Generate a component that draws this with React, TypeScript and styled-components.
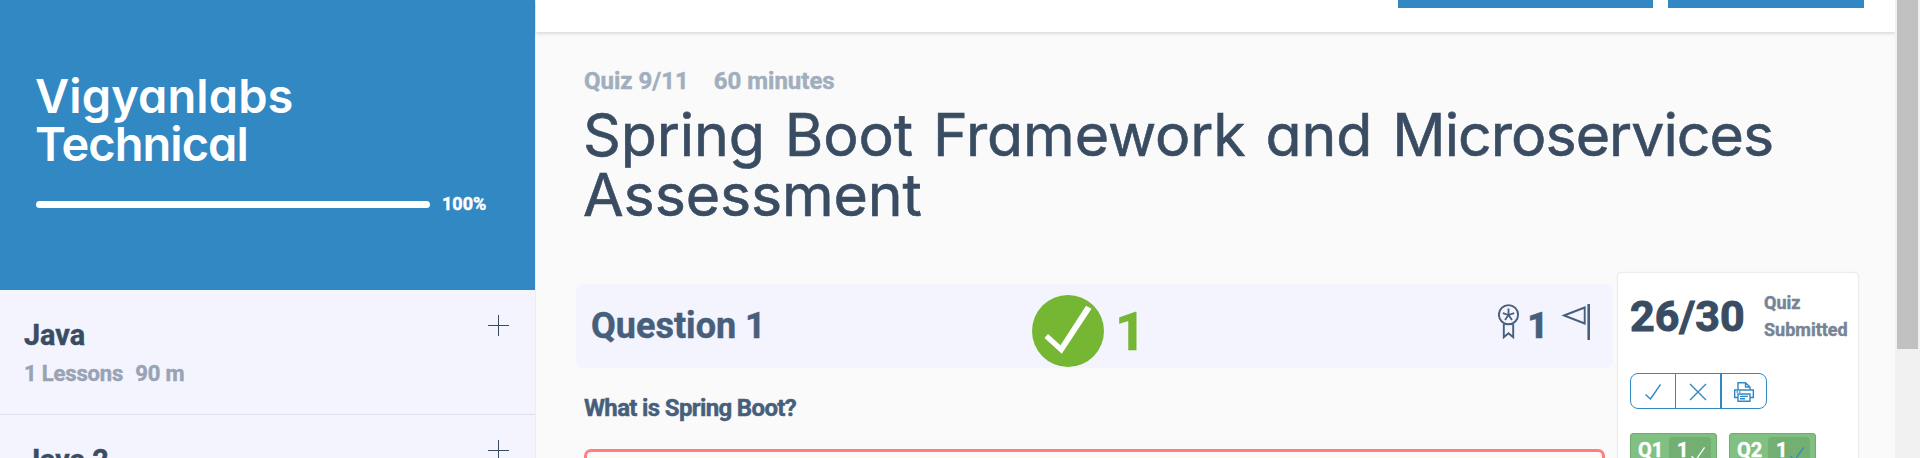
import React from "react";
import styled, { createGlobalStyle } from "styled-components";

const GlobalStyle = createGlobalStyle`
  *, *::before, *::after { box-sizing: border-box; }
  body {
    margin: 0;
    background: #fafafa;
    font-family: Roboto, "Liberation Sans", sans-serif;
    font-weight: 700;
    -webkit-text-stroke: 0.45px currentColor;
    overflow: hidden;
  }
  h1, h2, h3, p { margin: 0; }
  svg { display: block; flex: none; }
`;

const Page = styled.div`
  display: flex;
  width: 1920px;
  height: 458px;
  overflow: hidden;
`;

const Sidebar = styled.aside`
  width: 535px;
  flex: none;
  background: #f4f4ff;
`;

const CourseHeader = styled.header`
  height: 290px;
  padding: 72px 48px 0 35px;
  background: #3288c3;
  color: #fff;
`;

const CourseTitle = styled.h2`
  font: 600 47px/48px Inter, sans-serif;
  font-feature-settings: "cv11";
  -webkit-text-stroke-width: 0;
`;

const TitleLine = styled.span<{ $spacing: number }>`
  display: block;
  letter-spacing: ${(p) => p.$spacing}px;
`;

const ProgressRow = styled.div`
  display: flex;
  align-items: center;
  gap: 12px;
  margin: 22px 0 0 1px;
  height: 27px;
  font-size: 18px;
  line-height: 27px;
`;

const ProgressTrack = styled.div`
  width: 394px;
  height: 7px;
  margin-top: 2px;
  border-radius: 4px;
  background: #fff;
`;

const Section = styled.section`
  display: flex;
  justify-content: space-between;
  height: 125px;
  padding: 25px 25px 0 24px;
  border-bottom: 1px solid #dfdfeb;
`;

const SectionTitle = styled.h3`
  color: #394c62;
  font-size: 28.8px;
  line-height: 40px;
`;

const SectionMeta = styled.p`
  display: flex;
  gap: 12px;
  color: #98a3b4;
  font-size: 22px;
  line-height: 38px;
  letter-spacing: -0.15px;
`;

const Main = styled.main`
  display: flex;
  flex-direction: column;
  width: 1360px;
  flex: none;
  border-left: 1px solid #ededed;
  background: #fafafa;
`;

const TopBar = styled.div`
  display: flex;
  justify-content: flex-end;
  gap: 15px;
  flex: none;
  height: 32px;
  padding-right: 31px;
  background: #fff;
  box-shadow: 0 2px 3px rgba(0, 0, 0, 0.12);
`;

const TopButton = styled.div<{ $width: number }>`
  width: ${(p) => p.$width}px;
  height: 8px;
  background: #3288c3;
`;

const Heading = styled.div`
  height: 241px;
  flex: none;
  padding: 31px 40px 0 48px;
`;

const QuizMeta = styled.p`
  display: flex;
  gap: 25px;
  color: #a1aebe;
  font-size: 24px;
  line-height: 36px;
`;

const QuizTitle = styled.h1`
  margin: 6px 0 0 -1px;
  color: #394c62;
  font: 400 59px/60px Inter, sans-serif;
  font-feature-settings: "cv11";
  letter-spacing: -0.11px;
  word-spacing: 3.5px;
  white-space: nowrap;
  -webkit-text-stroke: 0.6px currentColor;
`;

const TightWord = styled.span`
  letter-spacing: -0.95px;
`;

const Content = styled.div`
  display: flex;
  align-items: flex-start;
  padding-left: 40px;
  gap: 5px;
`;

const QuestionColumn = styled.div`
  width: 1037px;
  padding-top: 11px;
  color: #475f7b;
`;

const QuestionBar = styled.div`
  display: grid;
  grid-template-columns: 440px 1fr auto;
  height: 84px;
  padding: 0 22px 0 16px;
  border-radius: 7px;
  background: #f4f4ff;
`;

const QuestionTitle = styled.h2`
  margin-left: -1px;
  font-size: 36px;
  line-height: 85px;
`;

const Result = styled.div`
  display: flex;
  gap: 11px;
  padding-top: 11px;
  color: #75b633;
  font-size: 54px;
  line-height: 73px;
`;

const Points = styled.div`
  display: flex;
  align-items: flex-start;
  gap: 7px;
  font-size: 36px;
  font-weight: 900;
  line-height: 85px;

  svg { margin-top: 20px; }
  svg:last-child { margin-left: 6px; }
`;

const QuestionText = styled.p`
  margin-top: 22px;
  padding-left: 8px;
  font-size: 24px;
  line-height: 37px;
  letter-spacing: -0.65px;
`;

const Answer = styled.div`
  width: 1021px;
  height: 60px;
  margin: 22px 0 0 8px;
  border: 3px solid #ff7f7f;
  border-radius: 7px;
`;

const ScoreCard = styled.aside`
  width: 240px;
  height: 200px;
  padding: 0 0 0 12px;
  border-radius: 4px;
  background: #fff;
  box-shadow: 0 0 2px rgba(0, 0, 0, 0.22);
`;

const ScoreRow = styled.div`
  display: flex;
  height: 100px;
`;

const Score = styled.div`
  width: 134px;
  padding-top: 11px;
  color: #394c62;
  font-size: 43px;
  line-height: 64px;
  -webkit-text-stroke-width: 1px;
`;

const Status = styled.div`
  width: 90px;
  padding-top: 16px;
  color: #768495;
  font-size: 18px;
  line-height: 27px;
`;

const ToolGroup = styled.div`
  display: flex;
  width: 137px;
  height: 36px;
  border: 1px solid #3288c3;
  border-radius: 8px;
`;

const Tool = styled.div<{ $divider?: number }>`
  display: flex;
  align-items: center;
  justify-content: center;
  flex: 1;
  padding: 2px 1px 0 0;
  color: #3288c3;
  border-right: ${(p) => p.$divider ?? 0}px solid #3288c3;
`;

const Chips = styled.div`
  display: flex;
  gap: 12px;
  margin-top: 24px;
`;

const Chip = styled.div`
  display: flex;
  justify-content: space-between;
  width: 87px;
  height: 42px;
  padding: 3px 5px 0 7px;
  border: 1px solid #71ab71;
  border-radius: 3px;
  background: #80c080;
  color: #fff;
  font-size: 20px;
  line-height: 27px;
`;

const ChipBadge = styled.span<{ $check: string }>`
  display: flex;
  width: 42px;
  height: 34px;
  padding-left: 8px;
  gap: 3px;
  border-radius: 4px;
  background: #73ae73;

  svg {
    margin-top: 10px;
    color: ${(p) => p.$check};
  }
`;

const ScrollTrack = styled.div`
  width: 25px;
  padding-left: 2px;
  background: #f1f1f1;
`;

const ScrollThumb = styled.div`
  width: 21px;
  height: 349px;
  background: #c1c1c1;
`;

const PlusIcon = () => (
  <svg width="22" height="22" viewBox="0 0 22 22" stroke="#394c62" fill="none">
    <path d="M0 10.5H21M10.5 0V21" />
  </svg>
);

const ThinCheck = ({ size }: { size: number }) => (
  <svg width={size} height={size} viewBox="0 0 16 16" fill="none" stroke="currentColor" strokeWidth="1.4">
    <path d="M.5 10.5 5.5 15 15.5.5" />
  </svg>
);

const CorrectIcon = () => (
  <svg width="72" height="72" viewBox="0 0 72 72">
    <circle cx="36" cy="36" r="36" fill="#75b633" />
    <path d="M12.5 43 16 39 28.5 50.3 54 10.7 59.5 13.7 29.8 58.7Z" fill="#fff" />
  </svg>
);

const AwardIcon = () => (
  <svg width="22" height="36" viewBox="0 0 22 36" fill="none" stroke="currentColor">
    <circle cx="10.5" cy="10.7" r="9.6" strokeWidth="1.9" />
    <path d="M5.8 20V33.2L10.5 29.3 15.2 33.2V20" strokeWidth="1.9" />
    <path d="M10.5 11V4.5M10.5 11 4.8 9.2M10.5 11 16.2 9.2M10.5 11 7 16M10.5 11 14 16" strokeWidth="1.8" />
  </svg>
);

const FlagIcon = () => (
  <svg width="30" height="36" viewBox="0 0 30 36" fill="none" stroke="currentColor">
    <path d="M3 11.5 23.7 3.5V19.5Z" strokeWidth="1.9" />
    <path d="M27.7 0V36" strokeWidth="2.6" />
  </svg>
);

const CloseIcon = () => (
  <svg width="18" height="18" viewBox="0 0 18 18" fill="none" stroke="currentColor" strokeWidth="1.4">
    <path d="M1 1 17 17M17 1 1 17" />
  </svg>
);

const PrintIcon = () => (
  <svg width="20" height="20" viewBox="0 0 20 20" fill="none" stroke="currentColor" strokeWidth="1.4">
    <path d="M4 8V.7H11.5L16 5V8M11.5.7V5H16M4 15.5H.7V8H19.3V15.5H16M4 12H16V19.2H4ZM6 14.4H14M6 16.8H11M2.5 10H4M5 10H6.5" />
  </svg>
);

const sections = [
  { title: "Java", lessons: "1 Lessons", time: "90 m" },
  { title: "Java 2", lessons: "1 Lessons", time: "90 m" },
];

export default function App() {
  return (
    <>
      <GlobalStyle />
      <Page>
        <Sidebar>
          <CourseHeader>
            <CourseTitle>
              <TitleLine $spacing={0.1}>Vigyanlabs</TitleLine>
              <TitleLine $spacing={-0.95}>Technical</TitleLine>
            </CourseTitle>
            <ProgressRow>
              <ProgressTrack />
              <span>100%</span>
            </ProgressRow>
          </CourseHeader>
          {sections.map((s) => (
            <Section key={s.title}>
              <div>
                <SectionTitle>{s.title}</SectionTitle>
                <SectionMeta><span>{s.lessons}</span><span>{s.time}</span></SectionMeta>
              </div>
              <PlusIcon />
            </Section>
          ))}
        </Sidebar>
        <Main>
          <TopBar>
            <TopButton $width={255} />
            <TopButton $width={196} />
          </TopBar>
          <Heading>
            <QuizMeta><span>Quiz 9/11</span><span>60 minutes</span></QuizMeta>
            <QuizTitle>
              Spring Boot Framework and <TightWord>Microservices</TightWord>
              <br />
              Assessment
            </QuizTitle>
          </Heading>
          <Content>
            <QuestionColumn>
              <QuestionBar>
                <QuestionTitle>Question 1</QuestionTitle>
                <Result><CorrectIcon />1</Result>
                <Points><AwardIcon />1<FlagIcon /></Points>
              </QuestionBar>
              <QuestionText>What is Spring Boot?</QuestionText>
              <Answer />
            </QuestionColumn>
            <ScoreCard>
              <ScoreRow>
                <Score>26/30</Score>
                <Status>Quiz Submitted</Status>
              </ScoreRow>
              <ToolGroup>
                <Tool $divider={1}><ThinCheck size={16} /></Tool>
                <Tool $divider={2}><CloseIcon /></Tool>
                <Tool><PrintIcon /></Tool>
              </ToolGroup>
              <Chips>
                <Chip>Q1<ChipBadge $check="#fff">1<ThinCheck size={14} /></ChipBadge></Chip>
                <Chip>Q2<ChipBadge $check="#3288c3">1<ThinCheck size={14} /></ChipBadge></Chip>
              </Chips>
            </ScoreCard>
          </Content>
        </Main>
        <ScrollTrack><ScrollThumb /></ScrollTrack>
      </Page>
    </>
  );
}
